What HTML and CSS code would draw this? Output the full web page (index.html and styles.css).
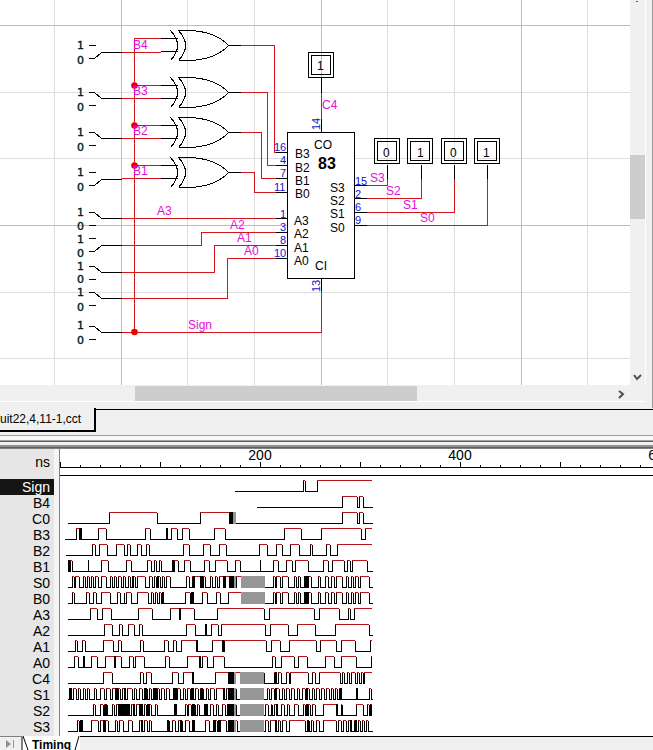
FILE: index.html
```html
<!DOCTYPE html>
<html lang="en">
<head>
<meta charset="utf-8">
<title>Circuit simulator</title>
<link rel="stylesheet" href="styles.css">
</head>
<body>
<main class="window">
  <section class="schematic">
    <svg class="canvas" role="img" aria-label="Adder schematic">
      <defs>
        <pattern id="grid" x="121" y="25" width="200" height="200" patternUnits="userSpaceOnUse">
          <path class="minor" d="M66.5 0V200M133.5 0V200M0 67.5H200M0 133.5H200"/>
          <path class="major" d="M0.5 0V200M0 0.5H200"/>
        </pattern>
        <g id="xor">
          <path d="M-3 -15Q11 0 -3 15M5 -15Q19 0 5 15M5 -15H16Q42 -14 55 0Q42 14 16 15H5"/>
          <path d="M-13 -7H4M-13 6H4M55 0H67"/>
        </g>
        <g id="high"><path d="M0 0H6L13 6H33M0 13H7"/></g>
        <g id="low"><path d="M0 0H7M0 13H6L13 7H33"/></g>
        <g id="probe"><rect width="25" height="25"/><rect x="3" y="3" width="19" height="19"/></g>
      </defs>
      <rect width="100%" height="100%" fill="url(#grid)"/>
      <g class="wire">
        <path d="M160 38H134V332M121 52H160M134 85H160M121 98H160M134 125H160M121 138H160M134 165H160M121 178H160"/>
        <path d="M240 45H274V152H276M240 92H267V165H275M240 132H261V178H275M240 172H254V192H275"/>
        <path d="M121 218H275M121 245H201V232H275M121 272H214V245H275M121 298H227V258H275M121 332H321V290"/>
        <path d="M321 92V118M366 185H387V178M366 198H421V178M366 212H454V178M366 225H487V178"/>
      </g>
      <g class="dots"><circle cx="134.5" cy="85.5" r="3.3"/><circle cx="134.5" cy="125.5" r="3.3"/><circle cx="134.5" cy="165.5" r="3.3"/><circle cx="134.5" cy="332" r="3.3"/></g>
      <g class="ink">
        <use href="#xor" x="173" y="45"/><use href="#xor" x="173" y="92"/><use href="#xor" x="173" y="132"/><use href="#xor" x="173" y="172"/>
        <use href="#low" x="88" y="45"/><use href="#high" x="88" y="92"/><use href="#high" x="88" y="132"/><use href="#low" x="88" y="172"/>
        <use href="#high" x="88" y="212"/><use href="#low" x="88" y="238"/><use href="#high" x="88" y="266"/><use href="#high" x="88" y="292"/><use href="#high" x="88" y="326"/>
        <rect class="chip" x="287" y="132" width="67" height="146"/>
        <path d="M275 152H287M275 165H287M275 178H287M275 192H287M275 218H287M275 232H287M275 245H287M275 258H287"/>
        <path d="M354 185H366M354 198H366M354 212H366M354 225H366M321 77V92M321 118V132M321 278V290"/>
        <path d="M387 164V178M421 164V178M454 164V178M487 164V178"/>
        <use href="#probe" x="308" y="52"/><use href="#probe" x="374" y="138"/><use href="#probe" x="407" y="138"/><use href="#probe" x="441" y="138"/><use href="#probe" x="474" y="138"/>
      </g>
      <g class="switch-text">
        <text x="77" y="49">1</text><text x="77" y="64">0</text>
        <text x="77" y="96">1</text><text x="77" y="111">0</text>
        <text x="77" y="136">1</text><text x="77" y="151">0</text>
        <text x="77" y="176">1</text><text x="77" y="191">0</text>
        <text x="77" y="216">1</text><text x="77" y="230">0</text>
        <text x="77" y="243">1</text><text x="77" y="257">0</text>
        <text x="77" y="270">1</text><text x="77" y="283">0</text>
        <text x="77" y="296">1</text><text x="77" y="311">0</text>
        <text x="77" y="329">1</text><text x="77" y="344">0</text>
      </g>
      <g class="net">
        <text x="133" y="49">B4</text><text x="133" y="95">B3</text><text x="133" y="135">B2</text><text x="133" y="175">B1</text>
        <text x="157" y="215">A3</text><text x="230" y="229">A2</text><text x="237" y="242">A1</text><text x="244" y="255">A0</text>
        <text x="188" y="329">Sign</text><text x="322" y="109">C4</text>
        <text x="370" y="182">S3</text><text x="386" y="195">S2</text><text x="403" y="209">S1</text><text x="420" y="222">S0</text>
      </g>
      <g class="port">
        <text x="295" y="158">B3</text><text x="295" y="172">B2</text><text x="295" y="185">B1</text><text x="295" y="198">B0</text>
        <text x="294" y="225">A3</text><text x="294" y="238">A2</text><text x="294" y="252">A1</text><text x="294" y="265">A0</text>
        <text x="330" y="192">S3</text><text x="330" y="205">S2</text><text x="330" y="218">S1</text><text x="330" y="232">S0</text>
        <text x="314" y="149">CO</text><text x="315" y="270">CI</text><text class="part" x="318" y="169">83</text>
        <text x="317" y="70">1</text><text x="383" y="157">0</text><text x="417" y="157">1</text><text x="450" y="157">0</text><text x="483" y="157">1</text>
      </g>
      <g class="pin">
        <text x="274" y="151">16</text><text x="280" y="164">4</text><text x="280" y="177">7</text><text x="274" y="191">11</text>
        <text x="280" y="218">1</text><text x="280" y="231">3</text><text x="280" y="244">8</text><text x="274" y="257">10</text>
        <text x="355" y="185">15</text><text x="355" y="198">2</text><text x="355" y="211">6</text><text x="355" y="224">9</text>
        <text transform="translate(320 130) rotate(-90)">14</text><text transform="translate(320 292) rotate(-90)">13</text>
      </g>
    </svg>
    <div class="vbar">
      <button class="arrow up" aria-label="Scroll up"><svg width="9" height="7"><path d="M1 5L4 2L8 5"/></svg></button>
      <div class="vthumb"></div>
      <button class="arrow" aria-label="Scroll down"><svg width="9" height="7"><path d="M1 1L4 5L8 1"/></svg></button>
    </div>
    <div class="hbar">
      <div class="hthumb"></div>
      <button class="arrow" aria-label="Scroll right"><svg width="7" height="9"><path d="M1 1L5 4L1 8"/></svg></button>
    </div>
  </section>

  <nav class="files"><button class="file">uit22,4,11-1,cct</button><div class="rest"></div></nav>
  <div class="splitter"></div>

  <section class="timing">
    <div class="names">
      <div class="unit">ns</div>
      <ul>
        <li class="selected">Sign</li><li>B4</li><li>C0</li><li>B3</li><li>B2</li><li>B1</li><li>S0</li><li>B0</li>
        <li>A3</li><li>A2</li><li>A1</li><li>A0</li><li>C4</li><li>S1</li><li>S2</li><li>S3</li>
      </ul>
    </div>
    <div class="plot">
      <svg class="ruler" role="img" aria-label="Time ruler">
        <defs><pattern id="ticks" width="100" height="27" patternUnits="userSpaceOnUse">
          <path d="M0.5 13V19M20.5 16V19M40.5 16V19M60.5 16V19M80.5 16V19M0 18.5H100"/>
        </pattern></defs>
        <rect width="100%" height="19" fill="url(#ticks)"/>
        <rect y="26" width="100%" height="1"/>
        <text x="200" y="11">200</text><text x="400" y="11">400</text><text x="600" y="11">600</text>
      </svg>
      <svg class="waves" id="waves" role="img" aria-label="Signal waveforms"></svg>
    </div>
  </section>

  <footer class="sheets">
    <button class="last" aria-label="Last sheet"><svg width="12" height="10"><path d="M1 1V9L6 5Z"/><path d="M8 1H9V9H8Z"/></svg></button>
    <button class="sheet"><svg class="edge" width="6" height="14"><path d="M0 0L5 14"/></svg><span>Timing</span><svg class="edge" width="6" height="14"><path d="M5 0L1 14"/></svg></button>
    <div class="rest"></div>
  </footer>
</main>
<script src="waves.js"></script>
</body>
</html>
```
FILE: styles.css
```css
* { box-sizing: border-box; }
body { margin: 0; background: #f0f0f0; font-family: "Liberation Sans", Arial, sans-serif; color: #000; }
button { margin: 0; padding: 0; border: 0; background: none; font: inherit; color: inherit; }
svg { display: block; }
.window { display: flex; flex-direction: column; min-height: 100vh; overflow: hidden; }

.schematic {
  display: grid; grid-template-columns: minmax(0, 1fr) 16px; grid-template-rows: auto 17px;
  padding: 0 6px 6px 0; border-right: 1px solid #999; background: #f0f0f0;
}
.canvas { width: 100%; height: 385px; background: #fff; font-size: 12px; }
.minor { stroke: #dedede; }
.major { stroke: #bdbdbd; }
.wire, .ink { transform: translate(0.5px, 0.5px); fill: none; shape-rendering: crispEdges; }
.wire { stroke: #d2161c; }
.ink { stroke: #000; }
.chip { fill: #fff; }
.dots { fill: #ec0000; }
.switch-text { font-family: "DejaVu Sans", sans-serif; font-size: 11px; fill: #022; stroke: #022; stroke-width: 0.4; }
.net { fill: #e010d8; }
.pin { fill: #1414d0; font-size: 11px; }
.part { font-size: 16px; font-weight: bold; }

.vbar { display: flex; flex-direction: column; align-items: stretch; border-right: 1px solid #fff; }
.vthumb { height: 64px; margin: 153px 0 auto; background: #cdcdcd; }
.hbar { grid-column: 1 / -1; display: flex; align-items: stretch; border-bottom: 1px solid #fff; padding: 1px 19px 0 0; }
.hthumb { width: 45%; margin: 0 auto 0 21.5%; background: #cdcdcd; }
.arrow { display: grid; place-items: center; min-width: 12px; min-height: 16px; }
.arrow.up { min-height: 2px; height: 2px; overflow: hidden; align-items: end; }
.arrow path { fill: none; stroke: #505050; stroke-width: 2; }

.files { display: flex; height: 28px; border-bottom: 1px solid #a0a0a0; }
.file {
  width: 96px; height: 24px; text-align: left; font-size: 12px;
  border-right: 2px solid #000; border-bottom: 2px solid #000;
}
.rest { flex: 1; border-top: 1px solid #000; }
.files .rest { margin-top: 1px; }
.splitter {
  height: 13px;
  background: linear-gradient(#f7f7f7 4px, #a0a0a0 4px 5px, #606060 5px 6px, #f0f0f0 6px 9px, #909090 9px 11px, #606060 11px 12px, #808080 12px);
}

.timing { display: flex; flex: 1; background: #fff; }
.names { width: 59px; border-right: 5px solid #f5f5f5; background: #e6e6e6; font-size: 14px; line-height: 16px; text-align: right; }
.unit { height: 30px; padding: 5px 4px 0 0; }
.names ul { margin: 0; padding: 0; list-style: none; }
.names li { padding-right: 4px; }
.names .selected { background: #151515; color: #fff; }
.plot { flex: 1; min-width: 0; border-left: 1px solid #808080; }
.ruler { width: 100%; height: 27px; font-size: 14px; text-anchor: middle; overflow: visible; }
.ruler path { stroke: #000; }
.waves { width: 100%; height: 260px; shape-rendering: crispEdges; }
.waves .base { fill: none; stroke: #000; }
.waves .top { fill: none; stroke: #b3161c; }
.waves .unknown { fill: #969696; }

.sheets { display: flex; height: 14px; overflow: hidden; }
.last { width: 23px; display: grid; place-items: center; border: 1px solid #808080; border-width: 1px 2px 0 0; }
.last path { fill: #909090; }
.sheet { display: flex; background: #fff; font-size: 12px; font-weight: bold; line-height: 18px; }
.sheet span { padding: 0 3px; }
.edge path { fill: none; stroke: #000; stroke-width: 1; }
```
FILE: waves.js
```js
// Each signal: start time, level changes, solid bursts [from, to] and undefined spans [from, to].
const signals = [
  { start: 235, edges: [303, 305, 317] },
  { start: 257, edges: [342, 357, 359, 363] },
  { start: 68, edges: [109, 157, 200, 229, 342, 357, 359, 363], burst: [[229, 233]], unknown: [[233, 236]] },
  { start: 65, edges: [76, 79, 98, 106, 145, 150, 171, 177, 182, 189, 214, 225, 284, 301, 321, 361, 365], burst: [[79, 82], [166, 168]] },
  { start: 66, edges: [92, 95, 99, 107, 116, 124, 127, 130, 137, 141, 146, 149, 183, 189, 203, 210, 219, 226, 259, 267, 276, 282, 290, 299, 310, 312, 326, 330, 337] },
  { start: 68, edges: [70, 72, 101, 108, 126, 131, 147, 151, 154, 156, 159, 161, 174, 178, 184, 190, 204, 209, 215, 227, 235, 240, 273, 278, 286, 292, 295, 308, 323, 328, 332, 344, 347, 350, 352, 367], burst: [[68, 70], [88, 89], [172, 174], [260, 261]] },
  { start: 68, edges: [72, 74, 75, 79, 83, 85, 87, 89, 91, 93, 95, 98, 101, 106, 110, 112, 114, 116, 118, 121, 123, 125, 128, 130, 133, 135, 137, 145, 149, 152, 154, 156, 158, 160, 162, 164, 166, 170, 186, 189, 192, 200, 203, 205, 210, 212, 215, 217, 219, 223, 225, 229, 236, 241, 273, 275, 276, 280, 282, 288, 294, 296, 298, 300, 308, 311, 318, 320, 325, 328, 331, 334, 336, 342, 346, 348, 351, 353, 355, 358, 360, 369], burst: [[132, 134], [157, 159], [193, 195], [200, 203], [223, 226], [229, 234], [304, 309]], unknown: [[234, 236], [241, 265]] },
  { start: 68, edges: [72, 74, 86, 89, 93, 96, 101, 110, 117, 120, 124, 124, 126, 131, 137, 148, 151, 153, 155, 157, 159, 161, 185, 190, 202, 207, 216, 220, 228, 241, 273, 275, 276, 280, 282, 288, 294, 296, 298, 300, 308, 311, 318, 320, 325, 328, 331, 334, 336, 342, 346, 348, 351, 353, 355, 358, 360, 369], burst: [[162, 164], [191, 194], [304, 309]], unknown: [[241, 265]] },
  { start: 68, edges: [90, 97, 102, 111, 138, 152, 170, 194, 217, 264, 269, 314, 319, 339, 348, 350, 354], burst: [[179, 181]] },
  { start: 68, edges: [104, 112, 119, 122, 128, 134, 139, 142, 186, 195, 211, 218, 221, 265, 270, 288, 297, 315, 335, 369], burst: [[205, 207]] },
  { start: 68, edges: [75, 77, 82, 85, 103, 113, 118, 121, 140, 143, 164, 168, 173, 176, 181, 196, 212, 222, 224, 266, 271, 280, 289, 316, 320, 336, 341, 355, 370], burst: [[196, 198], [222, 224]] },
  { start: 68, edges: [74, 78, 91, 97, 105, 121, 129, 133, 135, 144, 165, 169, 187, 199, 202, 207, 213, 224, 272, 275, 281, 294, 298, 307, 325, 334, 341, 356, 371], burst: [[83, 85], [114, 116], [199, 201]] },
  { start: 68, edges: [103, 112, 140, 143, 146, 151, 172, 178, 183, 192, 215, 264, 274, 276, 278, 281, 286, 289, 290, 308, 312, 315, 319, 340, 342, 344, 347, 349, 351, 355, 357, 359, 361, 363, 364], burst: [[192, 194], [228, 234], [275, 277]], unknown: [[234, 236], [240, 264]] },
  { start: 68, edges: [73, 76, 78, 80, 83, 85, 87, 89, 94, 96, 100, 104, 106, 110, 112, 115, 118, 120, 122, 124, 127, 132, 134, 136, 139, 142, 145, 147, 149, 151, 157, 159, 161, 164, 166, 169, 177, 180, 183, 185, 187, 190, 195, 198, 200, 203, 206, 208, 210, 214, 216, 223, 226, 236, 267, 269, 271, 274, 276, 279, 282, 284, 286, 289, 291, 294, 297, 299, 302, 305, 307, 309, 312, 314, 316, 319, 321, 324, 326, 329, 331, 333, 335, 337, 339, 341, 369, 371], burst: [[69, 72], [115, 118], [124, 126], [144, 147], [153, 157], [173, 177], [191, 194], [201, 203], [223, 225], [228, 234], [275, 277], [306, 308], [340, 342], [356, 358]], unknown: [[234, 236], [240, 264]] },
  { start: 68, edges: [93, 95, 100, 103, 104, 107, 112, 114, 116, 118, 120, 122, 127, 129, 131, 133, 136, 139, 144, 146, 149, 151, 155, 157, 185, 187, 188, 191, 193, 195, 197, 199, 210, 213, 216, 218, 222, 225, 228, 236, 265, 268, 271, 272, 274, 277, 281, 284, 287, 289, 294, 298, 303, 305, 308, 310, 312, 315, 323, 337, 341, 342, 356, 363, 367, 369, 371], burst: [[105, 107], [118, 130], [133, 135], [139, 143], [147, 150], [174, 177], [192, 195], [204, 208], [227, 234], [276, 278], [306, 308], [336, 338], [370, 371]], unknown: [[234, 236], [240, 264]] },
  { start: 68, edges: [77, 79, 91, 98, 100, 103, 105, 108, 115, 117, 119, 123, 128, 132, 139, 142, 144, 147, 149, 151, 167, 169, 172, 175, 178, 182, 185, 189, 205, 209, 214, 217, 220, 226, 228, 237, 265, 268, 270, 275, 278, 280, 282, 286, 289, 305, 307, 309, 311, 313, 316, 319, 323, 336, 338, 341, 343, 346, 348, 351, 354, 356, 358, 360, 362, 364, 366, 368], burst: [[80, 83], [103, 105], [141, 143], [167, 169], [180, 182], [192, 195], [213, 216], [218, 221], [228, 234], [275, 277], [307, 309], [350, 352], [355, 357]], unknown: [[234, 236], [240, 264]] }
];

const ORIGIN = 60;
const END = 372;
const PITCH = 16;
const HEIGHT = 11;

function draw(signal, row) {
  const hi = 4 + row * PITCH + 0.5;
  const lo = hi + HEIGHT;
  let x = signal.start - ORIGIN;
  let level = false;
  let base = "";
  let top = "";
  for (const edge of [...signal.edges, END]) {
    const next = edge - ORIGIN;
    if (level) top += `M${x} ${hi}H${next}`;
    else base += `M${x} ${lo}H${next + 1}`;
    if (edge !== END) base += `M${next + 0.5} ${hi}V${lo + 0.5}`;
    x = next;
    level = !level;
  }
  const box = (spans, name) => (spans || []).map(([a, b]) =>
    `<rect class="${name}" x="${a - ORIGIN}" y="${hi - 0.5}" width="${b - a}" height="${HEIGHT + 1}"/>`).join("");
  return `<path class="base" d="${base}"/><path class="top" d="${top}"/>` + box(signal.burst, "burst") + box(signal.unknown, "unknown");
}

document.getElementById("waves").innerHTML = signals.map(draw).join("");
```
